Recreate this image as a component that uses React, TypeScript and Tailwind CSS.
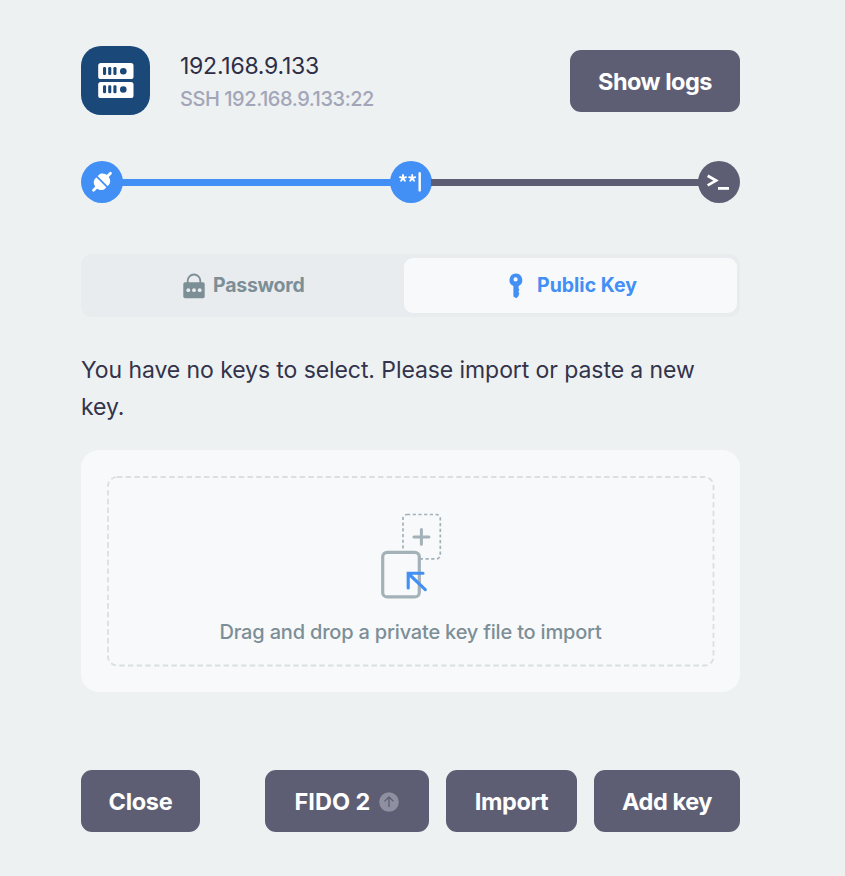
import type { ReactNode } from "react";

function Button({ children, className }: { children: ReactNode; className: string }) {
  return (
    <button
      className={`flex h-[62px] shrink-0 items-center justify-center rounded-[11px] bg-[#5d5e73] pt-[2px] text-[23.5px] font-bold whitespace-nowrap text-white ${className}`}
    >
      {children}
    </button>
  );
}

function ServerIcon() {
  return (
    <svg width="69" height="69" viewBox="0 0 69 69">
      <g fill="#fff">
        <rect x="17.2" y="17" width="35.3" height="16" rx="2.6" />
        <rect x="17.2" y="36" width="35.3" height="16" rx="2.6" />
      </g>
      <g fill="#1a4879">
        {[0, 18.3].map((offset) => (
          <g key={offset} transform={`translate(0 ${offset})`}>
            <rect x="22" y="21" width="3.1" height="8" rx="1.3" />
            <rect x="27.2" y="21" width="3.1" height="8" rx="1.3" />
            <rect x="32.4" y="21" width="3.1" height="8" rx="1.3" />
            <circle cx="42.3" cy="25.2" r="3.3" />
          </g>
        ))}
      </g>
    </svg>
  );
}

function PlugIcon() {
  return (
    <svg width="42" height="42" viewBox="0 0 42 42">
      <g transform="translate(21 20.8) rotate(-45)">
        <path d="M-12 0H12" stroke="#fff" strokeWidth="2.8" strokeLinecap="round" />
        <path d="M0 -7H2.5C5.8 -7 8.3 -3.8 8.3 0S5.8 7 2.5 7H-2.5C-5.8 7 -8.3 3.8 -8.3 0S-5.8 -7 -2.5 -7Z" fill="#fff" />
        <path d="M0 -8V8" stroke="#428ff5" strokeWidth="1.8" />
      </g>
    </svg>
  );
}

function PasswordStepIcon() {
  return (
    <svg width="42" height="42" viewBox="0 0 42 42" fill="none" stroke="#fff" strokeLinecap="round">
      <g strokeWidth="1.9">
        <path d="M13 17.2V14M13 17.2L16 16.2M13 17.2L14.9 19.8M13 17.2L11.1 19.8M13 17.2L10 16.2" />
        <path d="M22.2 17.2V14M22.2 17.2L25.2 16.2M22.2 17.2L24.1 19.8M22.2 17.2L20.3 19.8M22.2 17.2L19.2 16.2" />
      </g>
      <path d="M29.7 12.2v17.2" strokeWidth="2.4" />
    </svg>
  );
}

function TerminalIcon() {
  return (
    <svg width="42" height="42" viewBox="0 0 42 42" fill="none" stroke="#fff" strokeWidth="2.8">
      <path d="M9.7 14.8L18 19.6L9.7 24.4" />
      <path d="M20 27.4H31" />
    </svg>
  );
}

function LockIcon() {
  return (
    <svg width="22" height="26" viewBox="0 0 22 26">
      <path d="M4.7 10V7.8a6.3 6.3 0 0 1 12.6 0V10" fill="none" stroke="#7c8e96" strokeWidth="1.8" />
      <rect x="0.3" y="9.3" width="21.4" height="16" rx="1.8" fill="#7c8e96" />
      <g fill="#e8ecee">
        <circle cx="5.3" cy="17.2" r="1.9" />
        <circle cx="11" cy="17.2" r="1.9" />
        <circle cx="16.7" cy="17.2" r="1.9" />
      </g>
    </svg>
  );
}

function KeyIcon() {
  return (
    <svg width="14" height="26" viewBox="0 0 14 26" fill="#428ff5">
      <path
        fillRule="evenodd"
        d="M6.6 .5a6.6 6.6 0 0 1 3 12.5v2.6l.8 1.2-.8 1.4v1l.8 1.3-.8 1.4v1L7.3 25.2l-2.9-1.8V13.1A6.6 6.6 0 0 1 6.6 .5Zm0 3.8a2.1 2.1 0 1 0 0 4.2a2.1 2.1 0 0 0 0-4.2Z"
      />
    </svg>
  );
}

function DropIcon() {
  return (
    <svg width="62" height="86" viewBox="0 0 62 86" fill="none">
      <rect x="23" y="1.5" width="37.3" height="44.4" rx="4" stroke="#a3b1b8" strokeWidth="1.7" strokeDasharray="3.2 2.5" />
      <path d="M41.4 16.4v14.8M33.9 24h15" stroke="#a3b1b8" strokeWidth="3" strokeLinecap="round" />
      <rect x="2.7" y="39.3" width="36.6" height="44.6" rx="4.5" fill="#f8f9fb" stroke="#a3b1b8" strokeWidth="3.2" />
      <path d="M43 60.3H28.2V75M28.8 61L45.3 76.6" stroke="#428ff5" strokeWidth="3.1" strokeLinecap="round" />
    </svg>
  );
}

export default function App() {
  return (
    <main className="h-[876px] w-[845px] bg-[#edf1f2] pt-[46px] pl-[81px] font-['Inter',sans-serif] text-[#2e2e46]">
      <div className="flex w-[659px] flex-col">
        <header className="flex h-[69px] items-center">
          <div className="size-[69px] shrink-0 rounded-[20px] bg-[#1a4879]">
            <ServerIcon />
          </div>
          <div className="ml-[30px] flex flex-1 flex-col pt-[5px]">
            <div className="h-[33px] text-[23px] leading-[33px] tracking-[-0.25px]">192.168.9.133</div>
            <div className="h-[33px] text-[20px] leading-[33px] font-medium tracking-[-0.45px] text-[#a3a5b8]">SSH 192.168.9.133:22</div>
          </div>
          <Button className="w-[170px] tracking-[-0.5px]">Show logs</Button>
        </header>

        <div className="mt-[46px] flex h-[42px] items-center">
          <div className="size-[42px] rounded-full bg-[#428ff5]"><PlugIcon /></div>
          <div className="-mx-px h-[7px] w-[269px] bg-[#428ff5]" />
          <div className="size-[42px] rounded-full bg-[#428ff5]"><PasswordStepIcon /></div>
          <div className="-mx-px h-[7px] flex-1 bg-[#5d5e73]" />
          <div className="size-[42px] rounded-full bg-[#5d5e73]"><TerminalIcon /></div>
        </div>

        <div className="mt-[51px] flex h-[63px] rounded-[11px] bg-[#e8ecee] p-[4px] pr-[3px] text-[19.5px] font-bold">
          <div className="flex w-[319px] items-center pl-[98px] text-[#7c8e96]">
            <LockIcon />
            <span className="ml-[8px] tracking-[-0.25px]">Password</span>
          </div>
          <div className="flex flex-1 items-center rounded-[9px] bg-[#f8f9fb] pl-[105px] text-[#428ff5]">
            <KeyIcon />
            <span className="ml-[14px]">Public Key</span>
          </div>
        </div>

        <p className="mt-[35px] h-[74px] text-[23px] leading-[37px] tracking-[-0.08px] text-[#33334b]">
          You have no keys to select. Please import or paste a new
          <br />
          key.
        </p>

        <section className="relative mt-[24px] flex h-[242px] flex-col items-center rounded-[18px] bg-[#f8f9fb] pt-[63px]">
          <svg className="absolute inset-0" width="659" height="242" fill="none">
            <rect x="27" y="27" width="605.5" height="188.5" rx="9" stroke="#d8e0e2" strokeWidth="1.8" strokeDasharray="5.4 3.3" />
          </svg>
          <DropIcon />
          <div className="mt-[18px] text-[20px] leading-[30px] font-medium tracking-[-0.19px] text-[#7c8e96]">Drag and drop a private key file to import</div>
        </section>

        <footer className="mt-[78px] flex">
          <Button className="w-[119px] tracking-[-0.3px]">Close</Button>
          <Button className="ml-[65px] w-[164px]">
            <span>FIDO 2</span>
            <svg className="ml-[9px]" width="20" height="20" viewBox="0 0 20 20" fill="none">
              <circle cx="10" cy="10" r="9.8" fill="#8e8fa0" />
              <path d="M10 15V5.4M5.5 9.4L10 5l4.5 4.4" stroke="#5d5e73" strokeWidth="1.3" />
            </svg>
          </Button>
          <Button className="ml-[17px] w-[131px] tracking-[-0.4px]">Import</Button>
          <Button className="ml-[17px] w-[146px] tracking-[-0.4px]">Add key</Button>
        </footer>
      </div>
    </main>
  );
}
